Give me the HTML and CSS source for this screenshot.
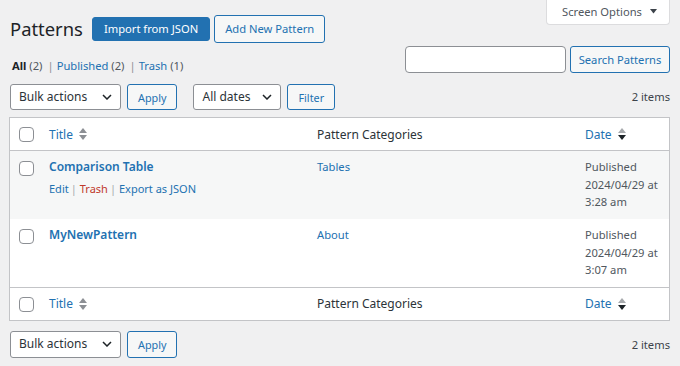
FILE: index.html
```html
<!DOCTYPE html>
<html lang="en">

<head>
    <meta charset="UTF-8">
    <meta name="viewport" content="width=device-width, initial-scale=1.0">
    <title>Patterns</title>
    <link rel="stylesheet" href="styles.css">
</head>

<body>

    <div class="wrap">
        <div class="page-top">
            <div class="title-bar">
                <h1>Patterns</h1>
                <a href="#" class="button button-primary">Import from JSON</a>
                <a href="#" class="button button-add">Add New Pattern</a>
            </div>
            <button class="screen-options">
                Screen Options
                <svg width="7" height="5" viewBox="0 0 7 5"><path d="M0 0H7L3.5 4.6Z" fill="#3c434a"/></svg>
            </button>
        </div>

        <div class="filter-row">
            <ul class="subsubsub">
                <li><a href="#" class="current">All <span class="num">(2)</span></a><span class="sep">|</span></li>
                <li><a href="#">Published <span class="num">(2)</span></a><span class="sep">|</span></li>
                <li><a href="#">Trash <span class="num">(1)</span></a></li>
            </ul>
            <div class="search-box">
                <input type="search" class="search-input">
                <button class="button search-button">Search Patterns</button>
            </div>
        </div>

        <div class="tablenav">
            <div class="actions">
                <div class="select select-bulk">
                    <span>Bulk actions</span>
                    <svg width="10" height="6" viewBox="0 0 10 6"><path d="M1 1L5 5L9 1" fill="none" stroke="#1d2327" stroke-width="1.5"/></svg>
                </div>
                <button class="button button-small">Apply</button>
            </div>
            <div class="actions">
                <div class="select select-dates">
                    <span>All dates</span>
                    <svg width="10" height="6" viewBox="0 0 10 6"><path d="M1 1L5 5L9 1" fill="none" stroke="#1d2327" stroke-width="1.5"/></svg>
                </div>
                <button class="button button-small">Filter</button>
            </div>
            <span class="items">2 items</span>
        </div>

        <table class="list-table">
            <thead>
                <tr>
                    <th class="col-cb"><input type="checkbox" class="cb"></th>
                    <th class="col-title">
                        <a href="#" class="sort-link">Title
                            <svg width="8" height="12" viewBox="0 0 8 12"><path d="M0 5L4 0L8 5Z" fill="#8c8f94"/><path d="M0 7H8L4 12Z" fill="#8c8f94"/></svg>
                        </a>
                    </th>
                    <th class="col-cat">Pattern Categories</th>
                    <th class="col-date">
                        <a href="#" class="sort-link">Date
                            <svg width="8" height="12" viewBox="0 0 8 12"><path d="M0 5L4 0L8 5Z" fill="#a7aaad"/><path d="M0 7H8L4 12Z" fill="#1d2327"/></svg>
                        </a>
                    </th>
                </tr>
            </thead>
            <tbody>
                <tr class="alt">
                    <td class="col-cb"><input type="checkbox" class="cb"></td>
                    <td>
                        <strong><a href="#" class="row-title">Comparison Table</a></strong>
                        <div class="row-actions">
                            <a href="#">Edit</a><span class="pipe">|</span><a href="#" class="trash">Trash</a><span class="pipe">|</span><a href="#">Export as JSON</a>
                        </div>
                    </td>
                    <td><a href="#">Tables</a></td>
                    <td class="date">Published<br>2024/04/29 at<br>3:28 am</td>
                </tr>
                <tr>
                    <td class="col-cb"><input type="checkbox" class="cb"></td>
                    <td>
                        <strong><a href="#" class="row-title">MyNewPattern</a></strong>
                    </td>
                    <td><a href="#">About</a></td>
                    <td class="date">Published<br>2024/04/29 at<br>3:07 am</td>
                </tr>
            </tbody>
            <tfoot>
                <tr>
                    <th class="col-cb"><input type="checkbox" class="cb"></th>
                    <th>
                        <a href="#" class="sort-link">Title
                            <svg width="8" height="12" viewBox="0 0 8 12"><path d="M0 5L4 0L8 5Z" fill="#8c8f94"/><path d="M0 7H8L4 12Z" fill="#8c8f94"/></svg>
                        </a>
                    </th>
                    <th>Pattern Categories</th>
                    <th>
                        <a href="#" class="sort-link">Date
                            <svg width="8" height="12" viewBox="0 0 8 12"><path d="M0 5L4 0L8 5Z" fill="#a7aaad"/><path d="M0 7H8L4 12Z" fill="#1d2327"/></svg>
                        </a>
                    </th>
                </tr>
            </tfoot>
        </table>

        <div class="tablenav bottom">
            <div class="actions">
                <div class="select select-bulk">
                    <span>Bulk actions</span>
                    <svg width="10" height="6" viewBox="0 0 10 6"><path d="M1 1L5 5L9 1" fill="none" stroke="#1d2327" stroke-width="1.5"/></svg>
                </div>
                <button class="button button-small">Apply</button>
            </div>
            <span class="items">2 items</span>
        </div>
    </div>

</body>

</html>
```
FILE: styles.css
```css
* {
    margin: 0;
    padding: 0;
    box-sizing: border-box;
}

body {
    background: #f0f0f1;
    font-family: "Noto Sans", "Open Sans", sans-serif;
    font-size: 11.2px;
    line-height: 1.4;
    color: #3c434a;
}

a {
    color: #2271b1;
    text-decoration: none;
}

.wrap {
    padding: 0 10px 0 9px;
}

/* top of page */
.page-top {
    display: flex;
    justify-content: space-between;
    align-items: flex-start;
}

.title-bar {
    display: flex;
    align-items: center;
    height: 28px;
    margin-top: 15px;
    padding-left: 1px;
}

h1 {
    font-size: 18.4px;
    font-weight: 400;
    line-height: 28px;
    color: #1d2327;
    margin-right: 9px;
}

.button {
    display: inline-flex;
    align-items: center;
    justify-content: center;
    height: 26px;
    padding: 0 10px;
    border: 1px solid #2271b1;
    border-radius: 3px;
    background: #f6f7f7;
    color: #2271b1;
    font-family: inherit;
    font-size: 11.2px;
    white-space: nowrap;
    cursor: pointer;
}

.button-small {
    padding: 0 10px;
    font-size: 10.8px;
}

.button-primary {
    height: 24px;
    padding: 0 11px;
    margin-right: 4px;
    background: #2271b1;
    color: #fff;
}

.button-add {
    height: 28px;
}

.screen-options {
    display: flex;
    align-items: center;
    gap: 8px;
    width: 124px;
    height: 25px;
    padding: 0 0 1px 15px;
    background: #fff;
    border: 1px solid #dcdcde;
    border-top: none;
    border-radius: 0 0 4px 4px;
    color: #50575e;
    font-family: inherit;
    font-size: 11.2px;
}

/* views + search */
.filter-row {
    display: flex;
    justify-content: space-between;
    align-items: flex-start;
    margin-top: 3px;
}

.subsubsub {
    display: flex;
    list-style: none;
    margin-top: 11px;
    padding-left: 3px;
    line-height: 17px;
    color: #8c8f94;
}

.subsubsub .current {
    color: #1d2327;
    font-weight: 700;
}

.subsubsub .num {
    color: #50575e;
    font-weight: 400;
}

.sep {
    margin: 0 3px 0 5px;
}

.search-box {
    display: flex;
    gap: 4px;
}

.search-input {
    width: 161px;
    height: 27px;
    border: 1px solid #8c8f94;
    border-radius: 4px;
    background: #fff;
}

.search-button {
    width: 100px;
    height: 27px;
}

/* table nav */
.tablenav {
    display: flex;
    align-items: center;
    height: 26px;
    margin-top: 10px;
    padding-left: 1px;
}

.tablenav.bottom {
    height: 27px;
}

.tablenav.bottom .select,
.tablenav.bottom .button {
    height: 27px;
}

.actions {
    display: flex;
    gap: 6px;
    margin-right: 16px;
}

.select {
    display: flex;
    align-items: center;
    justify-content: space-between;
    height: 26px;
    padding: 0 8px;
    border: 1px solid #8c8f94;
    border-radius: 3px;
    background: #fff;
    color: #2c3338;
    font-size: 12px;
}

.select-bulk {
    width: 111px;
}

.select-dates {
    width: 88px;
}

.items {
    margin-left: auto;
    color: #3c434a;
}

/* list table */
.list-table {
    width: 100%;
    margin-top: 7px;
    border: 1px solid #c3c4c7;
    border-collapse: separate;
    border-spacing: 0;
    background: #fff;
    table-layout: fixed;
}

th,
td {
    text-align: left;
    vertical-align: top;
}

th {
    padding: 7.5px 9px 7.5px;
    font-size: 12px;
    font-weight: 400;
    line-height: 17px;
    color: #2c3338;
}

thead th {
    border-bottom: 1px solid #c3c4c7;
}

tfoot th {
    border-top: 1px solid #c3c4c7;
}

td {
    padding: 7px 9px 8.2px;
    line-height: 17.6px;
}

.alt td {
    background: #f6f7f7;
}

th.col-cb {
    width: 30px;
    padding: 9px 0 0 9px;
}

td.col-cb {
    padding: 10px 0 0 9px;
}

.col-title,
.col-cat {
    width: 268px;
}

.cb {
    appearance: none;
    display: block;
    width: 15px;
    height: 15px;
    border: 1px solid #8c8f94;
    border-radius: 4px;
    background: #fff;
}

.sort-link {
    display: inline-flex;
    align-items: center;
    gap: 6px;
}

.row-title {
    font-size: 12px;
    font-weight: 600;
}

.row-actions {
    padding-top: 4px;
    font-size: 11px;
    color: #a7aaad;
}

.row-actions .pipe {
    margin: 0 3px 0 2px;
}

.row-actions a.trash {
    color: #c0392b;
}

.date {
    color: #50575e;
    white-space: nowrap;
}
```
